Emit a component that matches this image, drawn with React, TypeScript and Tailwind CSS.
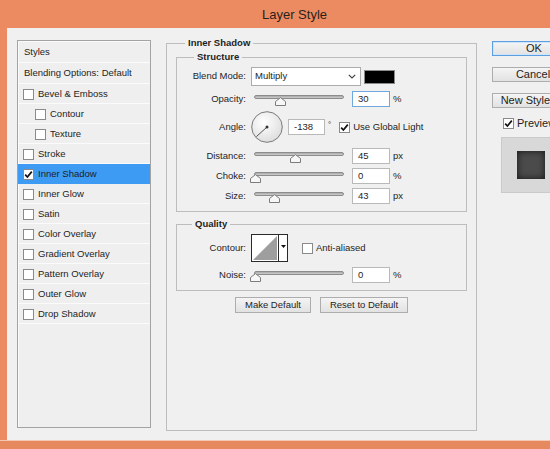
import React from "react";

const FONT = "font-['Liberation_Sans',Arial,sans-serif]";

function Check({ checked, className = "" }: { checked?: boolean; className?: string }) {
  return (
    <span
      className={`flex h-[11px] w-[11px] shrink-0 items-center justify-center border border-[#8a8a8a] bg-white ${className}`}
    >
      {checked && (
        <svg width="9" height="9" viewBox="0 0 9 9">
          <path d="M1.2 4.6 L3.4 7 L7.8 1.6" fill="none" stroke="#111" strokeWidth="1.7" />
        </svg>
      )}
    </span>
  );
}

function Slider({ pos }: { pos: number }) {
  return (
    <div className="relative ml-[3px] h-[16px] w-[90px] shrink-0">
      <div className="mt-[4px] h-[4px] rounded-full border border-[#8c8c8c] bg-gradient-to-b from-[#a8a8a8] to-[#cfcfcf]" />
      <svg
        className="absolute top-[6px]"
        style={{ left: pos - 5 }}
        width="11"
        height="9"
        viewBox="0 0 11 9"
      >
        <polygon
          points="0.5,8.5 0.5,4.5 5.5,0.6 10.5,4.5 10.5,8.5"
          fill="#f7f7f7"
          stroke="#7c7c7c"
          strokeWidth="1"
        />
      </svg>
    </div>
  );
}

function NumBox({ value, focus, w = "w-[38px]" }: { value: string; focus?: boolean; w?: string }) {
  return (
    <div
      className={`${w} flex h-[16px] shrink-0 items-center border bg-white pl-[5px] ${
        focus ? "border-[#6ea8dc]" : "border-[#b9b9b9]"
      }`}
    >
      {value}
    </div>
  );
}

function Label({ children }: { children: React.ReactNode }) {
  return <span className="w-[70px] shrink-0 pr-[1px] text-right">{children}</span>;
}

function SliderRow({
  label,
  pos,
  value,
  unit,
  focus,
  className = "",
}: {
  label: string;
  pos: number;
  value: string;
  unit: string;
  focus?: boolean;
  className?: string;
}) {
  return (
    <div className={`flex h-[16px] items-center ${className}`}>
      <Label>{label}</Label>
      <div className="ml-[4px] flex items-start self-stretch">
        <Slider pos={pos} />
      </div>
      <div className="ml-[8px]">
        <NumBox value={value} focus={focus} />
      </div>
      <span className="ml-[3px]">{unit}</span>
    </div>
  );
}

function Dial() {
  return (
    <svg width="32" height="32" viewBox="0 0 32 32" className="shrink-0">
      <defs>
        <radialGradient id="dialg" cx="40%" cy="35%" r="70%">
          <stop offset="0" stopColor="#ffffff" />
          <stop offset="1" stopColor="#dcdcdc" />
        </radialGradient>
      </defs>
      <circle cx="16" cy="16" r="15.3" fill="url(#dialg)" stroke="#7a7a7a" strokeWidth="1" />
      <line x1="16" y1="16" x2="5.4" y2="25.6" stroke="#555" strokeWidth="1" />
      <circle cx="16" cy="16" r="1.5" fill="#333" />
    </svg>
  );
}

function Btn({
  children,
  primary,
  className = "",
}: {
  children: React.ReactNode;
  primary?: boolean;
  className?: string;
}) {
  return (
    <div
      className={`flex h-[15px] items-center justify-center border bg-gradient-to-b from-[#f4f4f4] to-[#e2e2e2] ${
        primary ? "border-[#5b9fe0] shadow-[inset_0_0_0_1px_#cfe5fb]" : "border-[#adadad]"
      } ${className}`}
    >
      {children}
    </div>
  );
}

const STYLES: { name: string; indent?: boolean; checked?: boolean; active?: boolean }[] = [
  { name: "Bevel & Emboss" },
  { name: "Contour", indent: true },
  { name: "Texture", indent: true },
  { name: "Stroke" },
  { name: "Inner Shadow", checked: true, active: true },
  { name: "Inner Glow" },
  { name: "Satin" },
  { name: "Color Overlay" },
  { name: "Gradient Overlay" },
  { name: "Pattern Overlay" },
  { name: "Outer Glow" },
  { name: "Drop Shadow" },
];

export default function App() {
  return (
    <div className={`h-[449px] w-[550px] overflow-hidden ${FONT}`}>
      <div className="flex h-[449px] w-[589px] flex-col bg-[#ec8b61]">
        <div className="flex h-[28px] shrink-0 items-center justify-center pt-[1px] text-[13px] text-[#2a1f18]">
          Layer Style
        </div>

        <div className="mx-[7px] flex flex-1 items-start bg-[#f0f0f0] pl-[10px] text-[9.5px] text-[#1e1e1e]">
          {/* styles list */}
          <div className="mt-[12px] flex h-[388px] w-[134px] shrink-0 flex-col border border-[#a3a3a3] bg-[#efefef] shadow-[inset_1px_1px_0_#fafafa]">
            <div className="flex h-[22px] items-center border-b border-[#fbfbfb] pl-[6px] pt-[1px]">Styles</div>
            <div className="flex h-[21px] items-center border-b border-[#fbfbfb] pl-[6px] pt-[1px]">
              Blending Options: Default
            </div>
            {STYLES.map((s) => (
              <div
                key={s.name}
                className={`flex h-[20px] items-center border-b pt-[1px] ${
                  s.active ? "border-[#3d9bf3] bg-[#3d9bf3]" : "border-[#fbfbfb]"
                } ${s.indent ? "pl-[17px]" : "pl-[5px]"}`}
              >
                <Check checked={s.checked} />
                <span className="ml-[4px]">{s.name}</span>
              </div>
            ))}
          </div>

          {/* main settings */}
          <fieldset className="ml-[15px] mt-[9px] h-[394px] w-[310px] shrink-0 border border-[#bdbdbd] px-[9px]">
            <legend className="ml-[9px] px-[3px] font-bold leading-[12px]">Inner Shadow</legend>

            <fieldset className="mt-[2px] w-[291px] border border-[#bdbdbd] pb-[7px]">
              <legend className="ml-[17px] px-[3px] font-bold leading-[12px]">Structure</legend>

              <div className="mt-[4px] flex h-[19px] items-center">
                <Label>Blend Mode:</Label>
                <div className="ml-[4px] flex h-[19px] w-[110px] items-center justify-between border border-[#acacac] bg-white pl-[3px] pr-[4px]">
                  <span>Multiply</span>
                  <svg width="8" height="5" viewBox="0 0 8 5">
                    <path d="M0.8 0.8 L4 4 L7.2 0.8" fill="none" stroke="#444" strokeWidth="1.2" />
                  </svg>
                </div>
                <div className="ml-[3px] h-[14px] w-[31px] border border-[#8a8a8a] bg-black" />
              </div>

              <SliderRow className="mt-[5px]" label="Opacity:" pos={26} value="30" unit="%" focus />

              <div className="mt-[4px] flex h-[32px] items-center">
                <Label>Angle:</Label>
                <div className="ml-[4px]">
                  <Dial />
                </div>
                <div className="ml-[5px]">
                  <NumBox value="-138" w="w-[37px]" />
                </div>
                <span className="ml-[3px] self-start pt-[8px] text-[8px]">°</span>
                <Check checked className="ml-[8px]" />
                <span className="ml-[3px]">Use Global Light</span>
              </div>

              <div className="mt-[5px]">
                <SliderRow label="Distance:" pos={41} value="45" unit="px" />
              </div>
              <SliderRow className="mt-[4px]" label="Choke:" pos={1} value="0" unit="%" />
              <SliderRow className="mt-[4px]" label="Size:" pos={20} value="43" unit="px" />
            </fieldset>

            <fieldset className="mt-[6px] w-[291px] border border-[#bdbdbd] pb-[7px]">
              <legend className="ml-[15px] px-[3px] font-bold leading-[12px]">Quality</legend>

              <div className="mt-[4px] flex h-[28px] items-center">
                <Label>Contour:</Label>
                <div className="ml-[4px] flex h-[28px]">
                  <svg width="28" height="28" viewBox="0 0 28 28" className="shrink-0">
                    <rect x="0.5" y="0.5" width="27" height="27" fill="#fff" stroke="#2a2a2a" />
                    <polygon points="2,26 26,2 26,26" fill="#9e9e9e" />
                  </svg>
                  <div className="flex w-[9px] items-start justify-center border border-l-0 border-[#2a2a2a] bg-white pt-[10px]">
                    <svg width="5" height="3" viewBox="0 0 5 3">
                      <polygon points="0,0 5,0 2.5,3" fill="#111" />
                    </svg>
                  </div>
                </div>
                <Check className="ml-[14px]" />
                <span className="ml-[3px]">Anti-aliased</span>
              </div>

              <SliderRow className="mt-[5px]" label="Noise:" pos={1} value="0" unit="%" />
            </fieldset>

            <div className="mt-[6px] flex justify-center gap-[9px]">
              <Btn className="h-[16px] w-[76px]">Make Default</Btn>
              <Btn className="h-[16px] w-[88px]">Reset to Default</Btn>
            </div>
          </fieldset>

          {/* right column */}
          <div className="ml-[15px] mt-[13px] flex w-[84px] shrink-0 flex-col text-[11px]">
            <Btn primary>OK</Btn>
            <Btn className="mt-[11px] pr-[2px]">Cancel</Btn>
            <Btn className="mt-[11px] pr-[8px]">New Style...</Btn>
            <div className="ml-[11px] mt-[9px] flex h-[12px] items-center">
              <Check checked />
              <span className="ml-[3px]">Preview</span>
            </div>
            <div className="ml-[9px] mt-[8px] flex h-[56px] w-[60px] items-center justify-center border border-[#cacaca] bg-[#d8d8d8]">
              <div className="h-[28px] w-[28px] bg-[#4b4b4b] shadow-[inset_0_0_7px_rgba(0,0,0,0.75)]" />
            </div>
          </div>
        </div>
        <div className="h-[9px] shrink-0 border-t border-[#f3c9b4] bg-[#e7895e]" />
      </div>
    </div>
  );
}
